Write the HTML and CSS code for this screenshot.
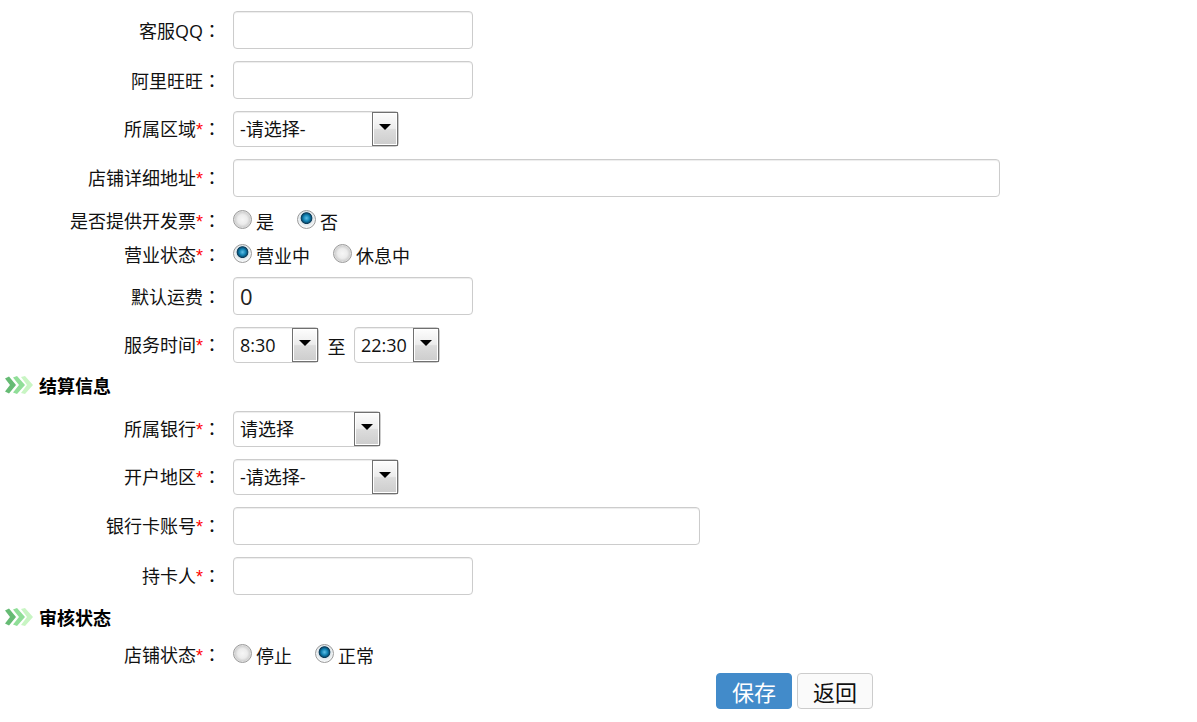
FILE: index.html
```html
<!DOCTYPE html>
<html lang="zh-CN">
<head>
<meta charset="utf-8">
<title>店铺信息</title>
<link rel="stylesheet" href="styles.css">
</head>
<body>
<svg class="defs" width="0" height="0" aria-hidden="true">
  <symbol id="chev" viewBox="0 0 28 18">
    <path d="M0 2.5 L4 0.5 L11 9 L4 17.5 L0 15.5 L5 9 Z" fill="#66bb74"/>
    <path d="M8 1.5 L12 0 L20 9 L12 18 L8 16.5 L14 9 Z" fill="#90de98"/>
    <path d="M16 1 L20 0 L28 9 L20 18 L16 17 L22 9 Z" fill="#c8f5c3"/>
  </symbol>
</svg>
<form class="form">
  <div class="row gap12"><label class="lbl">客服QQ<span class="colon" lang="zh-TW">：</span></label><input class="txt w240" type="text"></div>
  <div class="row gap12"><label class="lbl">阿里旺旺<span class="colon" lang="zh-TW">：</span></label><input class="txt w240" type="text"></div>
  <div class="row gap12"><label class="lbl">所属区域<i class="req">*</i><span class="colon" lang="zh-TW">：</span></label>
    <div class="sel w166"><span class="val">-请选择-</span><span class="arrow"></span></div></div>
  <div class="row gap7"><label class="lbl">店铺详细地址<i class="req">*</i><span class="colon" lang="zh-TW">：</span></label><input class="txt w767" type="text"></div>
  <div class="row tall"><label class="lbl">是否提供开发票<i class="req">*</i><span class="colon" lang="zh-TW">：</span></label>
    <div class="radios"><label class="opt"><input class="rad" type="radio" name="a">是</label><label class="opt"><input class="rad" type="radio" name="a" checked>否</label></div></div>
  <div class="row tall gap5"><label class="lbl">营业状态<i class="req">*</i><span class="colon" lang="zh-TW">：</span></label>
    <div class="radios"><label class="opt"><input class="rad" type="radio" name="b" checked>营业中</label><label class="opt"><input class="rad" type="radio" name="b">休息中</label></div></div>
  <div class="row gap12"><label class="lbl">默认运费<span class="colon" lang="zh-TW">：</span></label><input class="txt w240" type="text" value="0"></div>
  <div class="row gap12"><label class="lbl">服务时间<i class="req">*</i><span class="colon" lang="zh-TW">：</span></label>
    <div class="sel w86"><span class="val">8:30</span><span class="arrow"></span></div>
    <span class="to">至</span>
    <div class="sel w86"><span class="val">22:30</span><span class="arrow"></span></div></div>
  <h3 class="sec"><svg class="chev" width="28" height="18"><use href="#chev"/></svg>结算信息</h3>
  <div class="row gap12"><label class="lbl">所属银行<i class="req">*</i><span class="colon" lang="zh-TW">：</span></label>
    <div class="sel w148"><span class="val">请选择</span><span class="arrow"></span></div></div>
  <div class="row gap12"><label class="lbl">开户地区<i class="req">*</i><span class="colon" lang="zh-TW">：</span></label>
    <div class="sel w166"><span class="val">-请选择-</span><span class="arrow"></span></div></div>
  <div class="row gap12"><label class="lbl">银行卡账号<i class="req">*</i><span class="colon" lang="zh-TW">：</span></label><input class="txt w467" type="text"></div>
  <div class="row gap12"><label class="lbl">持卡人<i class="req">*</i><span class="colon" lang="zh-TW">：</span></label><input class="txt w240" type="text"></div>
  <h3 class="sec sec-tight"><svg class="chev" width="28" height="18"><use href="#chev"/></svg>审核状态</h3>
  <div class="row tall gap1"><label class="lbl">店铺状态<i class="req">*</i><span class="colon" lang="zh-TW">：</span></label>
    <div class="radios"><label class="opt"><input class="rad" type="radio" name="c">停止</label><label class="opt"><input class="rad" type="radio" name="c" checked>正常</label></div></div>
  <div class="actions"><button class="btn primary" type="button">保存</button><button class="btn" type="button">返回</button></div>
</form>
</body>
</html>
```
FILE: styles.css
```css
* { box-sizing: border-box; }
html, body { margin: 0; padding: 0; background: #fff; }
body {
  font-family: "Noto Sans CJK SC", "Open Sans", sans-serif;
  font-size: 18px;
  color: #111;
  overflow: hidden;
}
.defs { position: absolute; }
.form { padding-top: 11px; }
.row { display: flex; align-items: center; }
.gap12 { margin-bottom: 12px; }
.gap7 { margin-bottom: 7px; }
.gap5 { margin-bottom: 5px; }
.gap1 { margin-bottom: 1px; }
.tall { height: 34px; }
.lbl {
  width: 221px;
  margin-right: 12px;
  text-align: right;
  white-space: nowrap;
  line-height: 24px;
  font-family: "Open Sans", "Noto Sans CJK SC", sans-serif;
}
.colon { font-family: "Noto Sans CJK TC", sans-serif; }
.req { color: #f00; font-style: normal; font-family: "Liberation Sans", sans-serif; }
.txt {
  height: 38px;
  padding: 0 6px;
  border: 1px solid #ccc;
  border-radius: 4px;
  box-shadow: inset 0 1px 1px rgba(0,0,0,.075);
  font: 22px "Open Sans", "Liberation Sans", sans-serif;
  color: #222;
  outline: none;
  background: #fff;
}
.w240 { width: 240px; }
.w467 { width: 467px; }
.w767 { width: 767px; }
.w86 { width: 86px; }
.w148 { width: 148px; }
.w166 { width: 166px; }
.sel {
  display: flex;
  height: 36px;
  padding: 0;
  border: 1px solid #ccc;
  border-radius: 4px;
  box-shadow: inset 0 1px 1px rgba(0,0,0,.075);
  background: #fff;
}
.val {
  flex: 1;
  padding-left: 6px;
  line-height: 34px;
  font-family: "Open Sans", "Noto Sans CJK SC", sans-serif;
  white-space: nowrap;
}
.arrow {
  display: flex;
  align-items: center;
  justify-content: center;
  width: 26px;
  padding-bottom: 5px;
  border: 1px solid #707070;
  box-shadow: inset 0 0 0 1px #fff;
  background: linear-gradient(#fdfdfd 0, #ececec 48%, #dcdcdc 52%, #cdcdcd 100%);
}
.arrow::before {
  content: "";
  border-top: 6px solid #000;
  border-left: 6px solid transparent;
  border-right: 6px solid transparent;
}
.to { width: 35px; padding-top: 2px; text-align: center; }
.radios { display: flex; gap: 23px; }
.opt { display: flex; align-items: center; line-height: 24px; }
.rad {
  appearance: none;
  width: 19px;
  height: 19px;
  margin: -3px 4px 0 0;
  border: 1px solid #9a9a9a;
  border-radius: 50%;
  background: radial-gradient(circle at 50% 50%, #f6f6f6 0, #ececec 40%, #d2d2d2 62%, #ececec 72%, #fff 100%);
}
.rad:checked {
  background: radial-gradient(circle at 50% 42%, #5fc0e8 0, #0f7fb0 25%, #0b3a58 42%, #dfe6ea 48%, #ffffff 80%);
}
.sec {
  display: flex;
  align-items: center;
  height: 22px;
  margin: 0 0 14px;
  padding: 0 0 2px 5px;
  font-size: 18px;
  font-weight: 700;
  color: #000;
}
.sec-tight { margin-bottom: 9px; }
.chev { margin-right: 6px; }
.actions { display: flex; gap: 5px; padding-left: 716px; }
.btn {
  width: 76px;
  height: 36px;
  padding: 0;
  border: 1px solid #ccc;
  border-radius: 4px;
  background: #fafafa;
  color: #111;
  font: 22px "Noto Sans CJK SC", sans-serif;
}
.primary { background: #428bca; border-color: #428bca; color: #fff; }
```
